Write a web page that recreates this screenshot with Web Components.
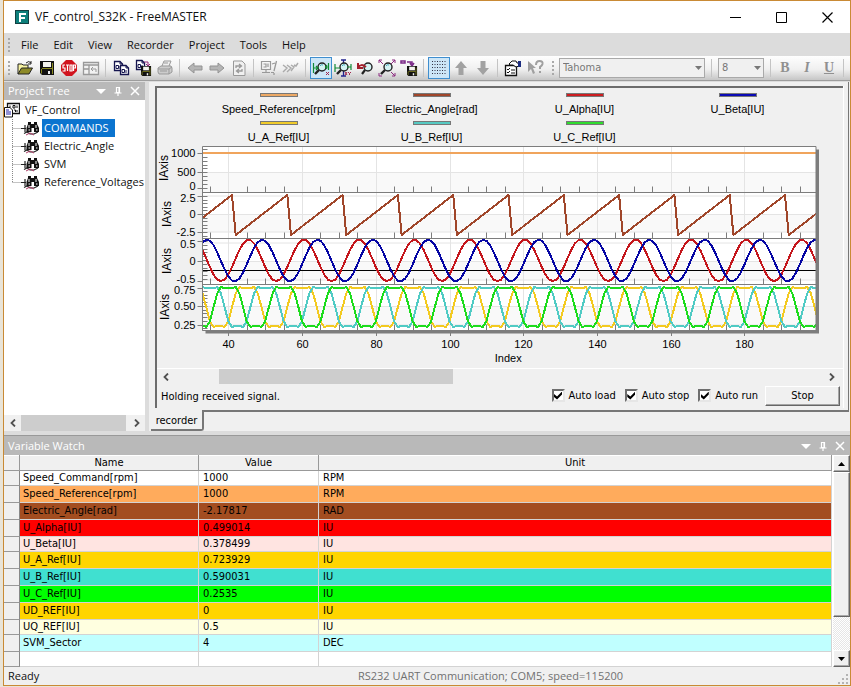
<!DOCTYPE html>
<html lang="en">
<head>
<meta charset="utf-8">
<title>VF_control_S32K - FreeMASTER</title>
<style>
html, body { margin: 0; height: 100%; }
body {
  --ui: "Open Sans", "Noto Sans", sans-serif;
  --dialog: "DejaVu Sans Condensed", "DejaVu Sans", sans-serif;
  --face: #f0f0f0;
  --frame: #c98a35;
  font: 11px/16px var(--ui);
  color: #111;
  background: #e9e4d8;
}
</style>
</head>
<body>
<fm-app></fm-app>

<script>
const define = (name, html, setup) => customElements.define(name, class extends HTMLElement {
  connectedCallback() {
    if (this.shadowRoot) return;
    const t = document.createElement('template');
    t.innerHTML = typeof html === 'function' ? html(this) : html;
    this.attachShadow({ mode: 'open' }).append(t.content);
    if (setup) setup(this, this.shadowRoot);
  }
});

/* ---------- icons ---------- */
const floppy = (x, y, s) => `<g transform="translate(${x} ${y}) scale(${s})"><path d="M0 0H14V14H2L0 12Z" fill="#111"/><path d="M3 1H11V6H3Z" fill="#f4f4ee"/><path d="M1 1V12L2 13V8H1ZM12 2V13H13V2Z" fill="#8a8a20"/><path d="M2 7H12V8H2Z" fill="#8a8a20"/><path d="M4 9H10V13H4Z" fill="#111"/><path d="M8 10H10V13H8Z" fill="#eee"/></g>`;
const lens = `<circle cx="9" cy="7" r="4" fill="#d5f3f3" stroke="#222" stroke-width="1.4"/><path d="M6 10L2 14" stroke="#222" stroke-width="2.4"/><path d="M7 6Q8 4 10 5" fill="none" stroke="#4ab" />`;
const page = (x, y) => `<g transform="translate(${x} ${y})"><path d="M.5 .5H6L8.500 3V9.500H.5Z" fill="#fff" stroke="#15154f" stroke-width="1.300"/><path d="M6 .5V3H8.500M2 4.500H4.500V7.500H2ZM6 5V8" fill="none" stroke="#15154f"/></g>`;
const ICONS = {
  open: `<path d="M1 14V4H5L6 5H11V8" fill="#f7f3a0" stroke="#222"/><path d="M1 14L4.500 8H15.500L12 14Z" fill="#8d8a28" stroke="#222"/><path d="M9 3Q12 0 14 3M14 1V4H11" fill="none" stroke="#222"/>`,
  save: floppy(1, 1, 1),
  stop: `<path d="M5 0H11L16 5V11L11 16H5L0 11V5Z" fill="#d1141e"/><path d="M4 5H2V8H4V11H1.500M5 5H8M6.500 5V11M9 5H11V11H9ZM12.500 11V5H14.500V8H12.500" fill="none" stroke="#fff" stroke-width="1.200"/>`,
  layout: `<path d="M.5 2.500H15.500V14.500H.5ZM.5 5H15.500M6 5V14.500M6 9H.5" fill="#f2f2f2" stroke="#999" stroke-width="1.300"/><path d="M8 9L10 7M8 9L10 11M8 9H13V12" fill="none" stroke="#999"/>`,
  copy: page(1, 1) + page(7, 5),
  copysave: page(1, 0) + `<path d="M9 2H13V5M11 4L13 6L15 4" fill="none" stroke="#912a78"/>` + floppy(6, 6, .72),
  print: `<path d="M5 6L7 1H14L12 6" fill="#eee" stroke="#999"/><path d="M1 8L4 6H14L15 8V12L12 14H2L1 12Z" fill="#ccc" stroke="#999"/><path d="M1 9H12V14M12 9L15 7M3 11H10M7 3H11" fill="none" stroke="#999"/>`,
  back: `<path d="M1 8L7 3V6H15V10H7V13Z" fill="#b5b5b5" stroke="#939393"/>`,
  forward: `<path d="M15 8L9 3V6H1V10H9V13Z" fill="#b5b5b5" stroke="#939393"/>`,
  refresh: `<path d="M2.500 1H11L14 4V15.500H2.500Z" fill="#f0f0f0" stroke="#999"/><path d="M5 8V6H10M8 4L10.500 6L8 8M11 9V11H6M8 9L5.500 11L8 13" fill="none" stroke="#999" stroke-width="1.300"/>`,
  probe: `<path d="M.5 1.500H9.500V9.500H.5ZM2.500 4H5V7H2.500M7 3.500V7M5 9.500V12M1 12.500H9M10 12.500H13" fill="none" stroke="#999" stroke-width="1.200"/><path d="M15.500 1L13 11M11 4L14 3M13 13V15" stroke="#999" stroke-width="1.300"/>`,
  wave: `<path d="M0 5L4 8L0 12M4 5L8 8L4 12M8 5L11 7L8 11M11 5L13 6L15 3" fill="none" stroke="#aaa" stroke-width="1.400"/>`,
  zoomx: lens + `<path d="M.5 3V13M0 8H5M3 6L5 8L3 10M15.500 3V10M16 7H12M14 5L12.500 7L14 9" fill="none" stroke="#118a35" stroke-width="1.200"/><path d="M13 12L16 15M16 12L13 15" stroke="#a2284e"/>`,
  zoomxy: `<path d="M6 0H11M8.500 0V16M6 16H11" stroke="#23238f" stroke-width="1.300"/>` + lens + `<path d="M0 4V12M0 8H5M16 4V10M16 7H12" stroke="#118a35" stroke-width="1.200"/><path d="M10 12L12 15M12 12L10 15M13 12L14.500 13.500L16 12M14.500 13.500V15" fill="none" stroke="#a2284e"/>`,
  zoomundo: `<circle cx="11" cy="7" r="4" fill="#d5f3f3" stroke="#222" stroke-width="1.400"/><path d="M8 10L5 14" stroke="#222" stroke-width="2.200"/><path d="M1 3V8H6M1 7.500Q4 3 9 7" fill="none" stroke="#a3202c" stroke-width="2"/>`,
  zoomfit: lens + `<path d="M0 3V0H3M0 0L4 4M13 0H16V3M16 0L12 4M0 13V16H3M16 13V16H13M16 16L12 12" fill="none" stroke="#8c2a80"/>`,
  zoomsave: `<path d="M0 1H4V3H0ZM6 2H11V4M9 3L11 6L13 3" fill="none" stroke="#7b2a88" stroke-width="1.500"/>` + floppy(6, 6, .72),
  grid: `<path d="M1 1.500H15M1 4.500H15M1 7.500H15M1 10.500H15M1 13.500H15" stroke="#334" stroke-dasharray="1 1.500"/>`,
  up: `<path d="M8 1L14 8H10.500V15H5.500V8H2Z" fill="#a2a2a2"/>`,
  down: `<path d="M8 15L14 8H10.500V1H5.500V8H2Z" fill="#a2a2a2"/>`,
  props: `<path d="M.5 5.500H11.500V15.500H.5Z" fill="#fff" stroke="#111" stroke-width="1.300"/><path d="M2 9L3 10L5 8M2 12L3 13L5 11M6 10H10M6 13H10" fill="none" stroke="#111"/><path d="M4 4L7 1H11L12 3H14V6L11 7L8 5H5Z" fill="#fff" stroke="#111"/><path d="M13 1H16V7H13Z" fill="#1c2d80"/>`,
  help: `<path d="M1 1V12L4 9L6 14L8 13L6 8H9Z" fill="#a0a0a0"/><path d="M9 5Q9 1 12.500 1Q16 1 15.500 4Q15 6 13 7V9M13 11V13" fill="none" stroke="#a0a0a0" stroke-width="2"/>`,
  pin: `<path d="M3.500 1.500H6.500V6.500H3.500ZM1.500 7H8.500M5 7V10M6 1.500V6.500" fill="none" stroke="#fff" stroke-width="1.200"/>`,
};

/* ---------- toolbar pieces ---------- */
define('tool-button', el => `<style>
  :host { display: block; }
  button { display: grid; place-items: center; width: 22px; height: 22px; padding: 0; border: 1px solid transparent; background: none; }
  button.on { border-color: #3f8ecf; background: #cde6f7; }
  svg { display: block; width: 16px; height: 16px; overflow: visible; }
</style><button type="button" class="${el.hasAttribute('on') ? 'on' : ''}" title="${el.getAttribute('label')}" aria-label="${el.getAttribute('label')}"><svg viewBox="0 0 16 16">${ICONS[el.getAttribute('icon')]}</svg></button>`);

define('tool-sep', `<style>:host { display: block; width: 1px; height: 18px; margin: 0 4px 0 3px; background: #c4c4c4; }</style>`);
define('tool-grip', `<style>:host { display: block; width: 2px; height: 14px; background: repeating-linear-gradient(#a9a9a9 0 2px, transparent 2px 4px); }</style>`);

define('tool-select', el => `<style>
  :host { display: block; position: relative; }
  select { appearance: none; width: 100%; height: 20px; padding: 0 3px; border: 1px solid #a9a9a9; border-radius: 0; background: #f0f0f0; color: #777; font: 11px/16px var(--dialog); opacity: 1; }
  svg { position: absolute; right: 3px; top: 8px; width: 7px; height: 4px; }
</style><select disabled aria-label="${el.getAttribute('label')}"><option>${el.getAttribute('value')}</option></select><svg viewBox="0 0 7 4"><path d="M0 0H7L3.500 4Z" fill="#777"/></svg>`);

define('format-button', `<style>
  :host { display: block; }
  button { width: 22px; height: 22px; padding: 0; border: 0; background: none; font: inherit; text-decoration: inherit; color: #909090; }
</style><button type="button"><slot></slot></button>`);

/* ---------- title, menu, toolbar ---------- */
define('title-bar', `<style>
  :host { display: flex; align-items: center; height: 32px; padding-left: 11px; background: #fff; font-size: 12px; }
  .logo { width: 14px; height: 14px; margin-right: 6px; }
  h1 { flex: 1; margin: 0; font: inherit; }
  button { width: 46px; height: 32px; padding: 0; border: 0; background: none; display: grid; place-items: center; }
  button svg { width: 11px; height: 11px; }
</style>
<svg class="logo" viewBox="0 0 14 14"><path d="M0 0H14V14H0Z" fill="#123f40"/><path d="M1 1H13V13H1Z" fill="#0d7f7b"/><path d="M4 3H11V5H6V7H10V9H6V12H4Z" fill="#fff"/></svg>
<h1>VF_control_S32K - FreeMASTER</h1>
<button type="button" aria-label="Minimize"><svg viewBox="0 0 11 11"><path d="M0 5.500H11" stroke="#000"/></svg></button>
<button type="button" aria-label="Maximize"><svg viewBox="0 0 11 11"><path d="M.5 .5H10.500V10.500H.5Z" fill="none" stroke="#000"/></svg></button>
<button type="button" aria-label="Close"><svg viewBox="0 0 11 11"><path d="M.5 .5L10.500 10.500M10.500 .5L.5 10.500" stroke="#000" stroke-width="1.200"/></svg></button>`);

define('menu-bar', `<style>
  :host { display: flex; align-items: center; height: 23px; padding-left: 4px; background: #dcdcdc; }
  nav { display: flex; gap: 15px; margin-left: 11px; }
  button { padding: 0; border: 0; background: none; color: #111; font: 11px/16px var(--ui); }
</style><tool-grip></tool-grip><nav>${['File', 'Edit', 'View', 'Recorder', 'Project', 'Tools', 'Help'].map(m => `<button type="button">${m}</button>`).join('')}</nav>`);

const tb = (icon, label, on) => `<tool-button icon="${icon}" label="${label}" ${on ? 'on' : ''}></tool-button>`;
define('tool-bar', `<style>
  :host { display: flex; align-items: center; height: 24px; padding: 0 1px 0 4px; border-bottom: 1px solid #9d9d9d; background: linear-gradient(#fefefe, #f0f0f0 55%, #c6c6c6); }
  tool-grip { margin-right: 4px; }
  .b { font: bold 14px "Liberation Serif", serif; }
  .i { font: italic bold 14px "Liberation Serif", serif; }
  .u { font: bold 14px "Liberation Serif", serif; text-decoration: underline; }
  .font { width: 146px; margin-left: 1px; }
  .size { width: 46px; }
</style>
<tool-grip></tool-grip>
${tb('open', 'Open project')}${tb('save', 'Save project')}${tb('stop', 'Stop communication')}${tb('layout', 'Window layout')}<tool-sep></tool-sep>
${tb('copy', 'Copy')}${tb('copysave', 'Copy to file')}${tb('print', 'Print')}<tool-sep></tool-sep>
${tb('back', 'Back')}${tb('forward', 'Forward')}${tb('refresh', 'Refresh')}<tool-sep></tool-sep>
${tb('probe', 'Scope')}${tb('wave', 'Recorder')}<tool-sep></tool-sep>
${tb('zoomx', 'Zoom X', 1)}${tb('zoomxy', 'Zoom X and Y')}${tb('zoomundo', 'Undo zoom')}${tb('zoomfit', 'Zoom to fit')}${tb('zoomsave', 'Save view')}<tool-sep></tool-sep>
${tb('grid', 'Show grid', 1)}${tb('up', 'Move up')}${tb('down', 'Move down')}<tool-sep></tool-sep>
${tb('props', 'Properties')}${tb('help', 'Context help')}<tool-grip style="margin-left:6px"></tool-grip>
<tool-select class="font" label="Font" value="Tahoma"></tool-select><tool-sep style="margin:0 6px 0 6px"></tool-sep>
<tool-select class="size" label="Font size" value="8"></tool-select><tool-sep style="margin:0 3px 0 6px"></tool-sep>
<format-button class="b">B</format-button><format-button class="i">I</format-button><format-button class="u">U</format-button><tool-sep></tool-sep>`);

/* ---------- docked panels ---------- */
define('panel-title', `<style>
  :host { display: flex; align-items: center; height: 18px; padding: 0 2px 0 4px; background: #b9b9b9; color: #fff; }
  h2 { flex: 1; margin: 0; font: inherit; }
  button { display: grid; place-items: center; width: 17px; height: 18px; padding: 0; border: 0; background: none; }
  svg { width: 10px; height: 10px; }
</style><h2><slot></slot></h2>
<button type="button" aria-label="Panel menu"><svg viewBox="0 0 10 10"><path d="M0 3H10L5 8Z" fill="#fff"/></svg></button>
<button type="button" aria-label="Auto hide"><svg viewBox="0 0 10 10">${ICONS.pin}</svg></button>
<button type="button" aria-label="Close panel"><svg viewBox="0 0 10 10"><path d="M1 1L9 9M9 1L1 9" stroke="#fff" stroke-width="1.500"/></svg></button>`);

/* Flat horizontal scroll bar; "before" and "thumb" are shares of the track. */
define('h-scroll', el => `<style>
  :host { display: flex; align-items: stretch; background: #f0f0f0; }
  button { display: grid; place-items: center; width: 17px; padding: 0; border: 0; background: none; }
  svg { width: 6px; height: 8px; }
  .track { flex: 1; display: flex; }
  .before { width: ${el.getAttribute('before')}%; }
  .thumb { width: ${el.getAttribute('thumb')}%; background: #cdcdcd; }
</style>
<button type="button" aria-label="Scroll left"><svg viewBox="0 0 6 8"><path d="M5 .5L1.500 4L5 7.500" fill="none" stroke="#505050" stroke-width="1.800"/></svg></button>
<div class="track"><div class="before"></div><div class="thumb"></div></div>
<button type="button" aria-label="Scroll right"><svg viewBox="0 0 6 8"><path d="M1 .5L4.500 4L1 7.500" fill="none" stroke="#505050" stroke-width="1.800"/></svg></button>`);

const bino = `<path d="M21 6V13M17 9.500H22M20 14.500L23 13L26 15H30L34 13" fill="none" stroke="#222" stroke-width="1.200"/><path d="M22 16L26 14L30 16" fill="none" stroke="#b0406a"/><path d="M24 3H27V5H30V3H33V5L35 9V13H30V9H27.500V13H22.500V9L24 5Z" fill="#111"/><path d="M25 6V9M32 6V9M24.500 11H26M32 11H33.500" stroke="#fff"/>`;
const node = (name, sel, last) => `<li class="${sel ? 'sel' : ''}"><svg viewBox="0 0 36 18"><path d="M8.500 0V${last ? 9 : 18}M8.500 9.500H18" stroke="#888" stroke-dasharray="1 1"/>${bino}</svg><span>${name}</span></li>`;
define('project-tree', `<style>
  :host { display: flex; flex-direction: column; width: 141px; background: #fff; overflow: hidden; }
  ul { flex: 1; margin: 0; padding: 1px 0 0; list-style: none; font-size: 11px; line-height: 18px; white-space: nowrap; }
  li { display: flex; height: 18px; gap: 2px; }
  li svg { flex: none; width: 36px; height: 18px; }
  li.root { gap: 3px; }
  li.root svg { width: 16px; }
  li span { padding: 0 2px; }
  .sel span { padding-right: 6px; background: #0b74cf; color: #fff; }
  h-scroll { height: 16px; }
</style>
<panel-title>Project Tree</panel-title>
<ul>
<li class="root"><svg viewBox="0 0 16 18"><path d="M3.500 2.500H15.500V12.500H3.500Z" fill="#fff" stroke="#111" stroke-width="1.300"/><path d="M6 4.500V7M9 4.500H11V7H9ZM13 4.500V7M13 9V11M10 9H11.500V11" fill="none" stroke="#111"/><path d="M.5 6.500H6L8.500 9V16H.5Z" fill="#fff" stroke="#111"/><path d="M2 9H5M2 11H7M2 13H7" stroke="#22a"/></svg><span>VF_Control</span></li>
${node('COMMANDS', 1)}${node('Electric_Angle')}${node('SVM')}${node('Reference_Voltages', 0, 1)}
</ul>
<h-scroll before="0" thumb="98"></h-scroll>`);

/* ---------- recorder chart ---------- */
define('legend-item', el => `<style>
  :host { display: flex; flex-direction: column; align-items: center; gap: 4px; height: 24px; font: 11px/16px "Liberation Sans", sans-serif; color: #000; white-space: nowrap; }
  i { box-sizing: border-box; width: 38px; height: 4px; border: 1px solid #777; background: ${el.getAttribute('color')}; }
</style><i></i><span><slot></slot></span>`);

/* Four stacked strips over one index axis; redrawn when the host's width changes. */
define('strip-plot', `<style>
  :host { display: block; height: 223px; overflow: hidden; }
  svg { display: block; width: 100%; height: 223px; }
  text { font: 12px "Liberation Sans", sans-serif; fill: #000; }
  .num { font-size: 11px; }
</style><svg></svg>`, (el, root) => {
  const svg = root.querySelector('svg');
  const L = 202.5, T = 146.5, STEP = 3.687, CUTS = [192.5, 238.5, 284.5, 330.5];
  const X = i => L + (i - 33) * STEP;
  const draw = () => {
    const W = Math.round(el.clientWidth) || 686;
    const R = 157 + W - 27, last = 33 + (R - L) / STEP;
    const lines = (d, c, w, x = '') => `<path d="${d}" fill="none" stroke="${c}" stroke-width="${w}" ${x}/>`;
    const series = (f, c) => {
      let p = '';
      for (let i = 32; i <= last + 1; i++) p += (p ? 'L' : 'M') + X(i).toFixed(1) + ' ' + f(i).toFixed(1);
      return lines(p, c, 2, 'stroke-linejoin="round" shape-rendering="crispEdges" clip-path="url(#area)"');
    };
    const mod = (a, n) => ((a % n) + n) % n;
    const duty = [.97, .97, 1, .84, .5, .14, 0, .03];
    const phase = c => i => { const m = mod(i - c, 15); return 327 - 40 * duty[Math.min(m, 15 - m)]; };
    const wave = c => i => 260.5 - Math.max(-20.5, Math.min(20.5, 21 * Math.cos(2 * Math.PI * (i - c) / 15)));
    let o = `<clipPath id="area"><rect x="${L}" y="${T}" width="${R - L}" height="184"/></clipPath>`;
    o += `<path d="M${L + 3} ${T + 3}H${R + 3}V333.500H${L + 3}Z" fill="#7d7d7d"/><path d="M${L} ${T}H${R}V330.500H${L}Z" fill="#fff"/>`;
    for (const [y, h] of [[172, 20], [214, 18], [261, 19], [306, 20]]) o += `<rect x="${L}" y="${y}" width="${R - L}" height="${h}" fill="#f9f9f9"/>`;
    let grid = '', ticks = '', low = '';
    for (const y of [153, 172.5, 196, 214.5, 232, 243, 261.5, 280, 288, 306.5, 325]) grid += `M${L} ${y}H${R}`;
    for (let i = 35; i <= last; i += 5) {
      const x = Math.round(X(i)) + .5;
      if (i % 20) { for (const y of CUTS) ticks += `M${x} ${y - 6}V${y}`; }
      else { grid += `M${x} ${T}V330`; low += `M${x} 331V336`; o += `<text class="num" x="${x}" y="348" text-anchor="middle">${i}</text>`; }
    }
    o += lines(grid, '#e4e4e4', 1);
    for (const y of CUTS) ticks += `M${L} ${y}H${R}`;
    for (const [a, b, s] of [[149, 191, 3.88], [196, 237, 3.6], [241, 282, 3.8], [287, 329, 3.75]]) for (let y = a; y < b; y += s) ticks += `M${L} ${Math.round(y) + .5}H${L + 5}`;
    o += lines(ticks, '#7d7d7d', 1);
    o += `<path d="M${L} 270.500H${R}" stroke="#000"/>`;
    o += series(() => 153, '#f0a45c');
    o += series(i => { const m = mod(i - 42, 15); return 235 - 40 * m / 14; }, '#a0462a');
    o += series(wave(45.5), '#c4161c') + series(wave(49.2), '#0606a4');
    o += series(phase(45), '#f3ca20') + series(phase(50), '#50cbc4') + series(phase(40), '#1cdc1c');
    o += `<path d="M${L} ${T}H${R}V330.500H${L}Z" fill="none" stroke="#7d7d7d"/>`;
    for (const [y, t, ly] of [[153, '1000', 153], [172, '500', 172], [188, '0', 186], [196, '2.5', 198], [214, '0', 214], [232, '-2.5', 232], [241, '0.5', 244], [261, '0', 261], [281, '-0.5', 279], [288, '0.75', 290], [306, '0.50', 306], [325, '0.25', 325]]) {
      low += `M${L - 5} ${y + .5}H${L}`;
      o += `<text class="num" x="${L - 7}" y="${ly + 4}" text-anchor="end">${t}</text>`;
    }
    o += lines(low, '#7d7d7d', 1);
    for (const [x, y] of [[168, 168], [171, 214], [171, 261], [169, 307]]) o += `<text transform="translate(${x} ${y}) rotate(-90)" text-anchor="middle">IAxis</text>`;
    o += `<text class="num" x="${(L + R) / 2 - 1}" y="362" text-anchor="middle">Index</text>`;
    svg.setAttribute('viewBox', `157 145 ${W} 223`);
    svg.innerHTML = o;
  };
  draw();
  new ResizeObserver(draw).observe(el);
});

define('check-item', `<style>
  :host { display: block; }
  label { display: flex; align-items: center; gap: 4px; white-space: nowrap; }
  input { appearance: none; display: grid; place-items: center; box-sizing: border-box; width: 13px; height: 13px; margin: 0; border: 2px solid; border-color: #6e6e6e #e6e6e6 #e6e6e6 #6e6e6e; background: #fff; }
  input:checked::before { content: ""; width: 8px; height: 8px; background: #000; clip-path: polygon(0 30%, 38% 62%, 100% 0, 100% 38%, 38% 100%, 0 68%); }
</style><label><input type="checkbox" checked><span><slot></slot></span></label>`);

define('recorder-view', `<style>
  :host { display: flex; flex-direction: column; min-width: 0; background: var(--face); font: 11px/16px var(--dialog); color: #000; }
  .page { flex: 1; display: flex; margin-right: 1px; padding: 4px 5px 2px 6px; border-right: 1px solid #777; }
  .frame { flex: 1; min-width: 0; display: flex; flex-direction: column; border: 2px solid #6c6c6c; border-width: 2px 0 0 2px; box-shadow: 1px 0 #fff; }
  .legend { display: grid; grid-template-columns: repeat(4, 1fr); row-gap: 4px; padding: 5px 29px 0 45px; }
  h-scroll { height: 15px; padding-right: 3px; border-top: 1px solid #fff; }
  .foot { display: flex; align-items: center; gap: 9px; height: 23px; padding: 0 3px 0 4px; }
  .foot p { flex: 1; margin: 0; padding-top: 3px; }
  .foot button { width: 75px; height: 20px; margin-left: -2px; padding: 0; border: 1px solid; border-color: #fff #666 #666 #fff; box-shadow: inset -1px -1px #a5a5a5; background: var(--face); font: inherit; color: #000; }
  .tabs { display: flex; height: 21px; padding: 0 1px 0 2px; }
  .tabs button { width: 53px; padding: 2px 0 0; border: 1px solid #777; border-width: 0 2px 2px 0; border-radius: 0 0 3px 0; background: var(--face); font: inherit; color: #000; }
  .tabs i { flex: 1; border-top: 2px solid #777; }
</style>
<div class="page"><div class="frame">
  <div class="legend">
    <legend-item color="#eda965">Speed_Reference[rpm]</legend-item><legend-item color="#a0462a">Electric_Angle[rad]</legend-item><legend-item color="#cc1d20">U_Alpha[IU]</legend-item><legend-item color="#0a0ab4">U_Beta[IU]</legend-item>
    <legend-item color="#f0cb2b">U_A_Ref[IU]</legend-item><legend-item color="#56c9c2">U_B_Ref[IU]</legend-item><legend-item color="#2fdc2f">U_C_Ref[IU]</legend-item>
  </div>
  <strip-plot></strip-plot>
  <h-scroll before="7" thumb="36"></h-scroll>
  <div class="foot"><p>Holding received signal.</p><check-item>Auto load</check-item><check-item>Auto stop</check-item><check-item>Auto run</check-item><button type="button">Stop</button></div>
</div></div>
<div class="tabs"><button type="button">recorder</button><i></i></div>`);

/* ---------- variable watch ---------- */
const ROWS = [
  ['Speed_Command[rpm]', '1000', 'RPM', '#fff', 1],
  ['Speed_Reference[rpm]', '1000', 'RPM', '#ffab5c'],
  ['Electric_Angle[rad]', '-2.17817', 'RAD', '#a34d20'],
  ['U_Alpha[IU]', '0.499014', 'IU', '#ff0000'],
  ['U_Beta[IU]', '0.378499', 'IU', '#ffe4e1', 1],
  ['U_A_Ref[IU]', '0.723929', 'IU', '#ffd500'],
  ['U_B_Ref[IU]', '0.590031', 'IU', '#40e0d0'],
  ['U_C_Ref[IU]', '0.2535', 'IU', '#00ff00'],
  ['UD_REF[IU]', '0', 'IU', '#ffd500'],
  ['UQ_REF[IU]', '0.5', 'IU', '#ffffe0', 1],
  ['SVM_Sector', '4', 'DEC', '#c0ffff'],
  ['', '', '', '#fff', 1],
];
define('variable-watch', `<style>
  :host { display: flex; flex-direction: column; border-top: 1px solid #999; background: #fff; }
  panel-title { height: 19px; }
  .body { display: flex; font: 11px/14px var(--dialog); }
  .grid { flex: 1; min-width: 0; }
  table { width: 100%; border-collapse: separate; border-spacing: 0; table-layout: fixed; color: #000; }
  th, td { padding: 0; box-sizing: border-box; overflow: hidden; white-space: nowrap; }
  thead th { height: 16px; background: var(--face); border-right: 1px solid #999; border-bottom: 1px solid #999; font-weight: normal; box-shadow: inset 0 1px #fff; }
  tbody th { background: var(--face); border-right: 1px solid #888; border-bottom: 1px solid #999; }
  td { height: 17px; padding-left: 4px; border-right: 1px solid #d3d3d3; border-bottom: 1px solid #d3d3d3; }
  tbody th + td { padding-left: 3px; }
  .low td { height: 15px; }
  .scroll { display: flex; flex-direction: column; width: 17px; margin-left: 1px; background: repeating-conic-gradient(#e6e6e6 0 25%, #fff 0 50%) 0 0 / 2px 2px; }
  .scroll button, .thumb { box-sizing: border-box; border: 1px solid; border-color: #fff #666 #666 #fff; box-shadow: inset -1px -1px #aaa; background: var(--face); }
  .scroll button { display: grid; place-items: center; height: 17px; padding: 0; }
  .scroll svg { width: 7px; height: 4px; }
  .thumb { flex: 145; }
  .gap { flex: 34; }
</style>
<panel-title>Variable Watch</panel-title>
<div class="body"><div class="grid"><table>
<colgroup><col style="width:16px"><col style="width:179px"><col style="width:120px"><col></colgroup>
<thead><tr><th aria-label="Row"></th><th scope="col">Name</th><th scope="col">Value</th><th scope="col">Unit</th></tr></thead>
<tbody>${ROWS.map(([n, v, u, c, low]) => `<tr class="${low ? 'low' : ''}" style="background:${c}"><th></th><td>${n}</td><td>${v}</td><td>${u}</td></tr>`).join('')}</tbody>
</table></div>
<div class="scroll"><button type="button" aria-label="Scroll up"><svg viewBox="0 0 7 4"><path d="M0 4H7L3.500 0Z"/></svg></button><div class="thumb"></div><div class="gap"></div><button type="button" aria-label="Scroll down"><svg viewBox="0 0 7 4"><path d="M0 0H7L3.500 4Z"/></svg></button></div>
</div>`);

define('status-bar', `<style>
  :host { display: grid; grid-template-columns: 1fr auto 1fr; align-items: center; height: 18px; padding: 0 1px 0 4px; background: var(--face); }
  .mid { color: #707070; padding-left: 124px; }
  svg { justify-self: end; align-self: end; width: 12px; height: 12px; }
</style><span>Ready</span><span class="mid">RS232 UART Communication; COM5; speed=115200</span>
<svg viewBox="0 0 12 12"><path d="M9 1H11V3H9ZM5 5H7V7H5ZM9 5H11V7H9ZM1 9H3V11H1ZM5 9H7V11H5ZM9 9H11V11H9Z" fill="#b4b4b4"/></svg>`);

define('fm-app', `<style>
  :host { box-sizing: border-box; display: flex; flex-direction: column; min-height: 100vh; padding: 0 0 1px 3px; }
  .win { flex: 1; display: flex; flex-direction: column; border: 1px solid var(--frame); background: #dcdcdc; }
  main { flex: 1; display: grid; grid-template-columns: 141px 1fr; column-gap: 4px; padding: 1px 0 4px; }
</style>
<div class="win">
  <title-bar></title-bar><menu-bar></menu-bar><tool-bar></tool-bar>
  <main><project-tree></project-tree><recorder-view></recorder-view></main>
  <variable-watch></variable-watch>
  <status-bar></status-bar>
</div>`);
</script>
</body>
</html>
